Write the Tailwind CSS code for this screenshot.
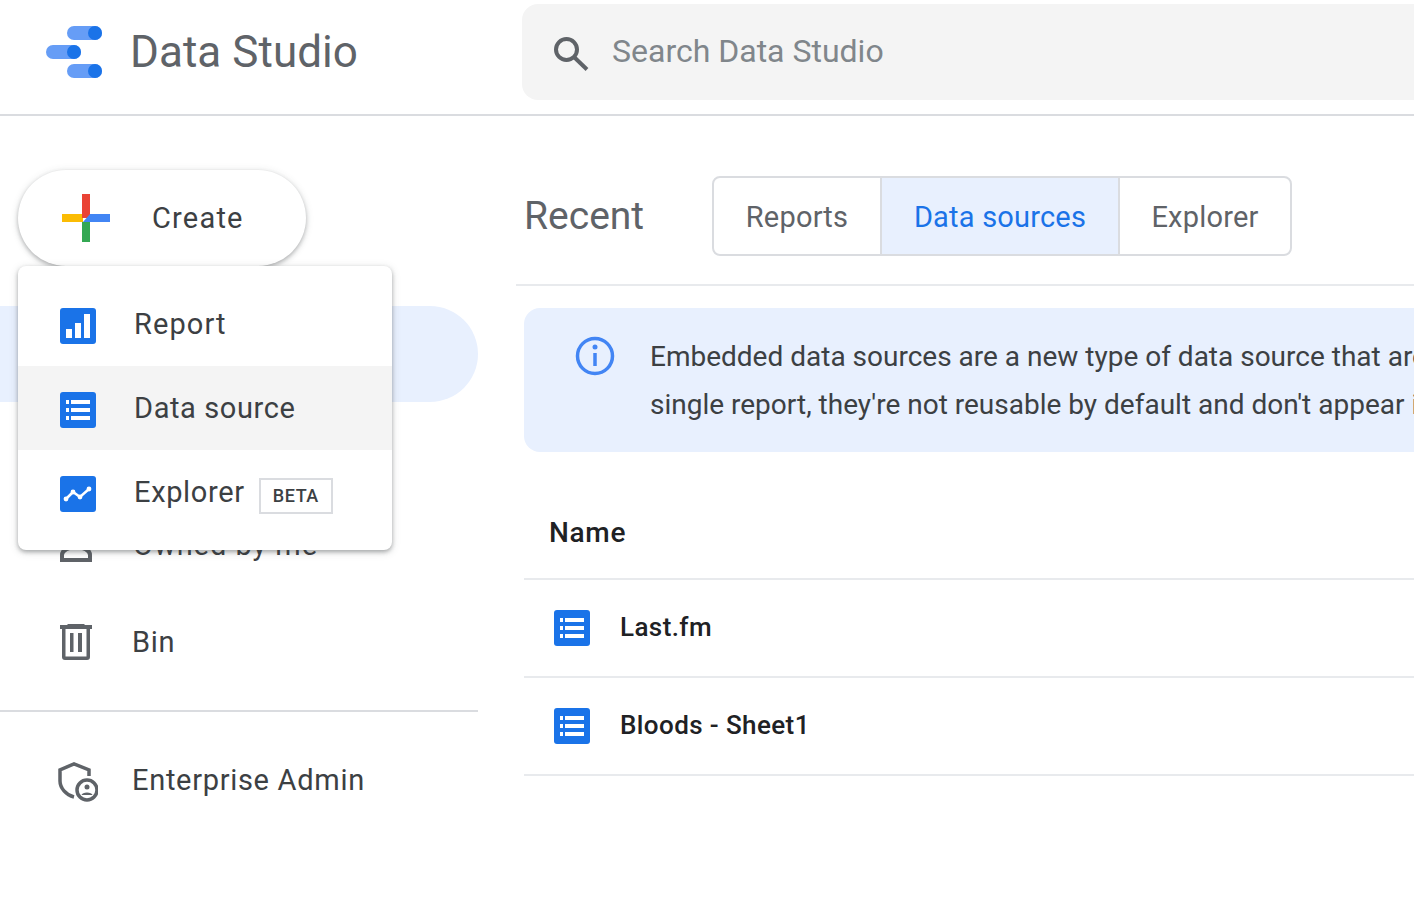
<!DOCTYPE html>
<html lang="en">
  <head>
    <meta charset="UTF-8" />
    <title>Data Studio</title>
    <script src="https://cdn.jsdelivr.net/npm/@tailwindcss/browser@4"></script>
  </head>
  <body class="h-[898px] overflow-hidden bg-white font-['Roboto',sans-serif] text-[#3c4043]">
    <!-- header -->
    <header class="flex h-[116px] items-start border-b-2 border-[#dadce0]">
      <div class="flex h-[104px] w-[522px] items-center">
        <svg class="ml-[46px] h-[52px] w-[56px]" viewBox="0 0 56 52">
          <rect x="21" y="0" width="35" height="14" rx="7" fill="#669df6" />
          <circle cx="49" cy="7" r="7" fill="#1a73e8" />
          <rect x="0" y="19" width="35" height="14" rx="7" fill="#669df6" />
          <circle cx="28" cy="26" r="7" fill="#1a73e8" />
          <rect x="21" y="38" width="35" height="14" rx="7" fill="#669df6" />
          <circle cx="49" cy="45" r="7" fill="#1a73e8" />
        </svg>
        <span class="ml-[28px] text-[44px] tracking-[0.05px] text-[#5f6368]">Data Studio</span>
      </div>
      <div class="mt-1 flex h-24 flex-1 items-center rounded-l-2xl bg-[#f4f4f4] pl-7">
        <svg class="h-[42px] w-[42px]" viewBox="0 0 42 42" fill="none" stroke="#5f6368" stroke-width="4">
          <circle cx="16.5" cy="18.5" r="10.5" />
          <path d="M24 26 L37 38.5" />
        </svg>
        <span class="ml-[20px] -mt-[2px] text-[32px] text-[#80868b]">Search Data Studio</span>
      </div>
    </header>

    <div class="flex">
      <!-- sidebar -->
      <aside class="relative w-[516px] shrink-0">
        <div class="mt-[54px] ml-[18px] flex h-24 w-[288px] items-center rounded-full bg-white pl-11 shadow-[0_2px_4px_rgba(60,64,67,0.35),0_1px_8px_rgba(60,64,67,0.12)]">
          <svg class="h-12 w-12" viewBox="0 0 48 48">
            <rect x="0" y="20" width="21" height="8" fill="#fbbc04" />
            <rect x="20" y="0" width="8" height="24" fill="#ea4335" />
            <path d="M21 28 L28 20 H48 V28 Z" fill="#4285f4" />
            <rect x="20" y="28" width="8" height="20" fill="#34a853" />
          </svg>
          <span class="mt-[2px] ml-[42px] text-[29px] tracking-[1.2px]">Create</span>
        </div>

        <nav class="mt-10 w-[478px] text-[29px] tracking-[0.7px]">
          <div class="h-24 rounded-r-full bg-[#e8f0fe]"></div>
          <div class="h-24"></div>
          <div class="flex h-24 items-center">
            <svg class="ml-[60px] h-8 w-8" viewBox="0 0 32 32" fill="none" stroke="#5f6368" stroke-width="4">
              <circle cx="16" cy="7" r="6" />
              <path d="M2 30 V25 C2 20 9 17 16 17 S30 20 30 25 V30 Z" />
            </svg>
            <span class="ml-[41px] tracking-[0.95px]">Owned by me</span>
          </div>
          <div class="flex h-24 items-center">
            <svg class="ml-[60px] h-9 w-8" viewBox="0 0 32 36" fill="#5f6368">
              <path d="M8 0 H24 L25 1 H32 V5 H0 V1 H7 Z" />
              <path fill-rule="evenodd" d="M2 5 H30 V33 A3 3 0 0 1 27 36 H5 A3 3 0 0 1 2 33 Z M5.5 5 V32.5 H26.5 V5 Z" />
              <rect x="10" y="9" width="3.5" height="19" />
              <rect x="18" y="9" width="4" height="19" />
            </svg>
            <span class="mt-[2px] ml-[40px]">Bin</span>
          </div>
          <div class="mt-5 border-t-2 border-[#dadce0] pt-[30px]">
            <div class="flex h-[76px] items-center">
              <svg class="mt-[3px] ml-[58px] h-10 w-10" viewBox="0 0 40 40" fill="none" stroke="#5f6368" stroke-width="3.5">
                <path d="M31 14 V8 L16 2 L2 8 V19 C2 26 8 33 16 35" />
                <circle cx="29" cy="28" r="10" />
                <circle cx="29" cy="25" r="2.5" fill="#5f6368" stroke="none" />
                <path d="M23.5 33 C24 29.5 34 29.5 34.5 33 Z" fill="#5f6368" stroke="none" />
              </svg>
              <span class="mt-[2px] ml-[34px]">Enterprise Admin</span>
            </div>
          </div>
        </nav>

        <!-- create menu -->
        <div class="absolute top-[150px] left-[18px] w-[374px] rounded-lg bg-white py-4 text-[29px] shadow-[0_2px_4px_rgba(60,64,67,0.4),0_2px_10px_rgba(60,64,67,0.15)]">
          <div class="flex h-[84px] items-center pt-1 pl-[42px]">
            <svg class="h-9 w-9" viewBox="0 0 36 36">
              <rect width="36" height="36" rx="3" fill="#1a73e8" />
              <rect x="6" y="21" width="6" height="9" fill="#fff" />
              <rect x="15" y="15" width="6" height="15" fill="#fff" />
              <rect x="24" y="6" width="6" height="24" fill="#fff" />
            </svg>
            <span class="-mt-[2px] ml-[38px] tracking-[1.1px]">Report</span>
          </div>
          <div class="flex h-[84px] items-center bg-[#f4f4f4] pt-1 pl-[42px]">
            <svg class="h-9 w-9" viewBox="0 0 36 36">
              <rect width="36" height="36" rx="3" fill="#1a73e8" />
              <path d="M6 8 H9 V12 H6 Z M11 8 H30 V12 H11 Z M6 16 H9 V20 H6 Z M11 16 H30 V20 H11 Z M6 24 H9 V28 H6 Z M11 24 H30 V28 H11 Z" fill="#fff" />
            </svg>
            <span class="-mt-[2px] ml-[38px] tracking-[0.6px]">Data source</span>
          </div>
          <div class="flex h-[84px] items-center pt-1 pl-[42px]">
            <svg class="h-9 w-9" viewBox="0 0 36 36">
              <rect width="36" height="36" rx="3" fill="#1a73e8" />
              <path d="M6 23 L13 16 L20 21 L29 13" fill="none" stroke="#fff" stroke-width="2.5" />
              <circle cx="6" cy="23" r="2.4" fill="#fff" />
              <circle cx="13" cy="16" r="2.4" fill="#fff" />
              <circle cx="20" cy="21" r="2.4" fill="#fff" />
              <circle cx="29" cy="13" r="2.4" fill="#fff" />
            </svg>
            <span class="-mt-[2px] ml-[38px] tracking-[0.65px]">Explorer</span>
            <span class="mt-1 ml-[14px] border-2 border-[#dadce0] px-3 py-1 text-[18px] leading-6 font-medium tracking-[0.6px]">BETA</span>
          </div>
        </div>
      </aside>

      <!-- main -->
      <main class="min-w-0 flex-1">
        <div class="flex h-[170px] items-start border-b-2 border-[#e8eaed]">
          <h2 class="mt-[55px] ml-2 w-[188px] text-[39px] leading-[90px] text-[#5f6368]">Recent</h2>
          <div class="mt-[60px] flex h-20 overflow-hidden rounded-lg border-2 border-[#dadce0] text-[29px] tracking-[0.2px] text-[#5f6368]">
            <div class="flex w-[166px] items-center justify-center pt-1">Reports</div>
            <div class="flex w-[240px] items-center justify-center border-x-2 border-[#dadce0] bg-[#e8f0fe] pt-1 text-[#1a73e8]">Data sources</div>
            <div class="flex w-[170px] items-center justify-center pt-1">Explorer</div>
          </div>
        </div>

        <div class="mt-[22px] ml-2 flex h-36 overflow-hidden rounded-l-2xl bg-[#e8f0fe] text-[28px] leading-[48px] whitespace-nowrap">
          <svg class="mt-7 ml-[51px] h-10 w-10 shrink-0" viewBox="0 0 40 40" fill="none" stroke="#4285f4" stroke-width="3.5">
            <circle cx="20" cy="20" r="17.5" />
            <path d="M20 17 V30" />
            <circle cx="20" cy="11" r="2.5" fill="#4285f4" stroke="none" />
          </svg>
          <p class="mt-[25px] ml-[35px]">
            Embedded data sources are a new type of data source that are<br />
            single report, they're not reusable by default and don't appear in
          </p>
        </div>

        <div class="mt-[32px] ml-2 text-[28px]">
          <div class="flex h-[96px] items-center border-b-2 border-[#e8eaed] pt-1 pl-[25px] font-medium tracking-[0.7px] text-[#202124]">Name</div>
          <div class="flex h-[98px] items-center border-b-2 border-[#e8eaed] pl-[30px] text-[26px] font-medium tracking-[0.4px] text-[#202124]">
            <svg class="h-9 w-9" viewBox="0 0 36 36">
              <rect width="36" height="36" rx="3" fill="#1a73e8" />
              <path d="M6 8 H9 V12 H6 Z M11 8 H30 V12 H11 Z M6 16 H9 V20 H6 Z M11 16 H30 V20 H11 Z M6 24 H9 V28 H6 Z M11 24 H30 V28 H11 Z" fill="#fff" />
            </svg>
            <span class="-mt-[2px] ml-[30px]">Last.fm</span>
          </div>
          <div class="flex h-[98px] items-center border-b-2 border-[#e8eaed] pl-[30px] text-[26px] font-medium tracking-[0.4px] text-[#202124]">
            <svg class="h-9 w-9" viewBox="0 0 36 36">
              <rect width="36" height="36" rx="3" fill="#1a73e8" />
              <path d="M6 8 H9 V12 H6 Z M11 8 H30 V12 H11 Z M6 16 H9 V20 H6 Z M11 16 H30 V20 H11 Z M6 24 H9 V28 H6 Z M11 24 H30 V28 H11 Z" fill="#fff" />
            </svg>
            <span class="-mt-[2px] ml-[30px]">Bloods - Sheet1</span>
          </div>
        </div>
      </main>
    </div>
  </body>
</html>
